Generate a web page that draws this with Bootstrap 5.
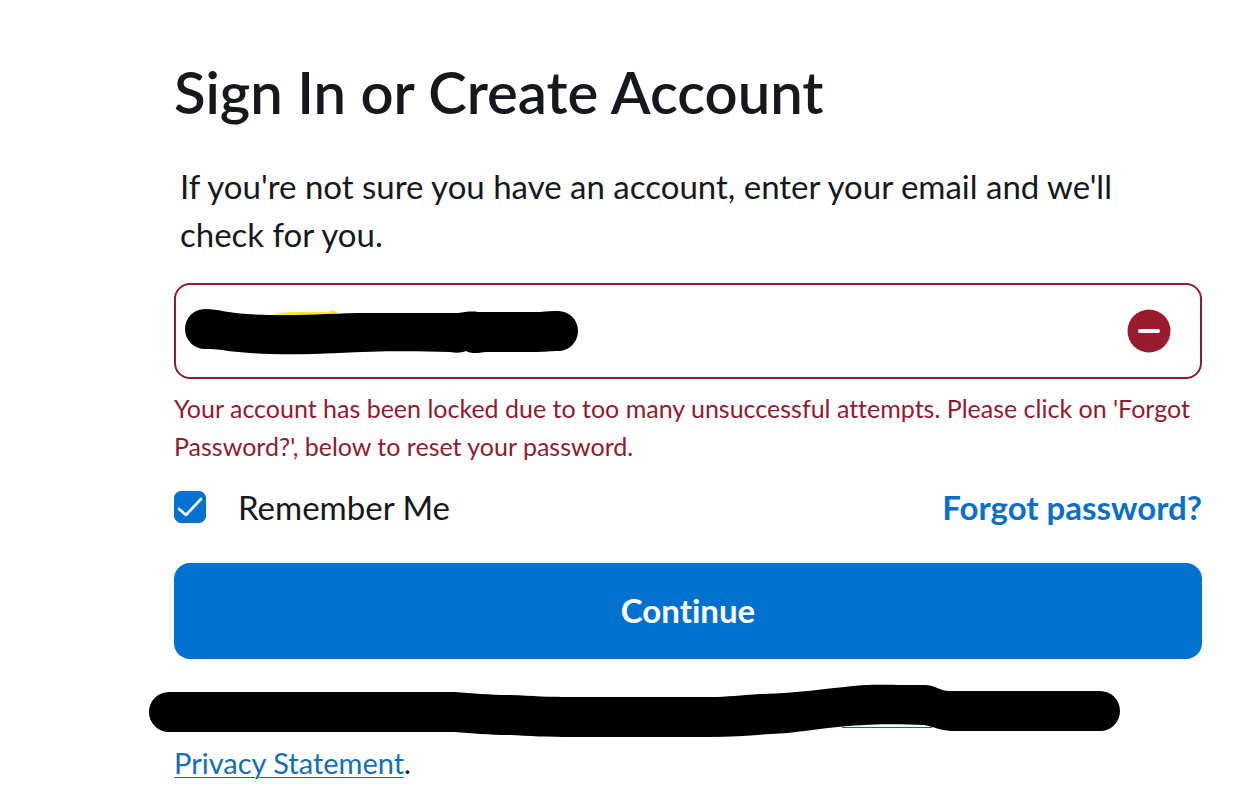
<!DOCTYPE html>
<html lang="en">
<head>
<meta charset="utf-8">
<meta name="viewport" content="width=device-width, initial-scale=1">
<title>Sign In or Create Account</title>
<link href="https://cdn.jsdelivr.net/npm/bootstrap@5.3.0/dist/css/bootstrap.min.css" rel="stylesheet">
<style>
  body { font-family: Lato, "Liberation Sans", sans-serif; font-variant-ligatures: none; color: #15181d; background: #fff; font-size: 33px; line-height: 48px; }
  .signin { padding: 56px 53px 0 174px; }
  .signin h1 { font-size: 58px; line-height: 72px; font-weight: 600; margin-bottom: 34px; }
  .intro { padding: 0 48px 0 6px; margin-bottom: 25px; }
  .account-input { height: 96px; border: 2px solid #8c1d33; border-radius: 16px; padding: 0 96px 0 24px; font-size: 33px; }
  .stroke-cover { position: absolute; left: 10px; top: 24px; pointer-events: none; }
  .error-icon { position: absolute; right: 31px; top: 26px; }
  .error-text { color: #8f1b32; font-size: 25px; line-height: 38px; margin: 10px 0 18px; }
  .remember .form-check-input { width: 32px; height: 32px; border-radius: 7px; border-color: #0071ce; background-color: #0071ce; background-size: 32px 32px;
    background-image: url("data:image/svg+xml,%3csvg xmlns='http://www.w3.org/2000/svg' viewBox='0 0 32 32'%3e%3cpath fill='none' stroke='white' stroke-width='2.6' stroke-linecap='round' stroke-linejoin='round' d='M5 18 12 24 27 8'/%3e%3c/svg%3e"); }
  .forgot { color: #0b70c4; font-weight: 700; }
  .btn-continue { height: 96px; border: 0; border-radius: 16px; background: #0071ce; color: #fff; font-size: 33px; font-weight: 700; font-variant-ligatures: none; margin-top: 32px; }
  .btn-continue:hover { background: #005fae; color: #fff; }
  .legal { margin-top: 32px; font-size: 29px; line-height: 48px; }
  .legal-cover { height: 48px; margin-left: -26px; }
  .legal a { color: #146fae; text-decoration-thickness: 1px; text-underline-offset: 3px; }
</style>
</head>
<body>
<main class="signin">
  <h1>Sign In or Create Account</h1>
  <form>
    <p class="intro">If you're not sure you have an account, enter your email and we'll check for you.</p>
    <div class="position-relative">
      <input type="email" class="form-control account-input" aria-label="Email address" aria-describedby="accountError" aria-invalid="true">
      <svg class="stroke-cover" width="396" height="50" viewBox="0 0 396 50" aria-hidden="true">
        <path d="M90 8Q96 5 110 5L144 5 149 3 153 5 153 9Z" fill="#ffe92e"/>
        <path d="M21 2C35 2 43 6 63 7 110 10 145 6 185 6L274 6C281 5 287 4 294 5L356 5C363 4 367 4 374 4A20 20 0 0 1 374 44C366 44 361 45 351 45L302 45C294 46 287 47 282 44 277 46 272 46 266 45 230 44 190 44 155 46 110 48 70 48 38 43 32 42 27 42 21 42A20 20 0 0 1 21 2Z" fill="#000"/>
      </svg>
      <svg class="error-icon" width="44" height="44" viewBox="0 0 44 44" aria-hidden="true">
        <circle cx="22" cy="22" r="21.500" fill="#981b30"/>
        <path d="M13 22H31" stroke="#fff" stroke-width="4" stroke-linecap="round"/>
      </svg>
    </div>
    <p class="error-text" id="accountError">Your account has been locked due to too many unsuccessful attempts. Please click on 'Forgot Password?', below to reset your password.</p>
    <div class="remember d-flex justify-content-between align-items-center">
      <div class="d-flex align-items-center">
        <input class="form-check-input m-0" type="checkbox" id="remember" checked>
        <label for="remember" class="ps-2 ms-4">Remember Me</label>
      </div>
      <a href="#" class="forgot text-decoration-none">Forgot password?</a>
    </div>
    <button type="submit" class="btn btn-continue w-100 d-block">Continue</button>
  </form>
  <div class="legal">
    <svg class="legal-cover d-block" width="974" height="48" viewBox="0 0 974 48" overflow="visible" aria-hidden="true">
      <path d="M694 36.500H784" stroke="#17668f" stroke-width="1"/>
      <path d="M21 1H306C325 2 340 4 362 4 385 5 400 6 424 6H562C580 6 592 4 612 3 650 2 675-2 705-5 720-7 735-6 776-6 788-6 790-1 800 0H952A20 20 0 0 1 952 40H803C791 39 787 36 776 34 755 33 730 33 717 34 690 35 665 39 640 42 615 43 590 46 562 46H424C400 46 380 45 362 44 340 44 325 42 306 41H21A20 20 0 0 1 21 1Z" fill="#000"/>
    </svg>
    <a href="#">Privacy Statement</a>.
  </div>
</main>
<script src="https://cdn.jsdelivr.net/npm/bootstrap@5.3.0/dist/js/bootstrap.bundle.min.js"></script>
</body>
</html>
